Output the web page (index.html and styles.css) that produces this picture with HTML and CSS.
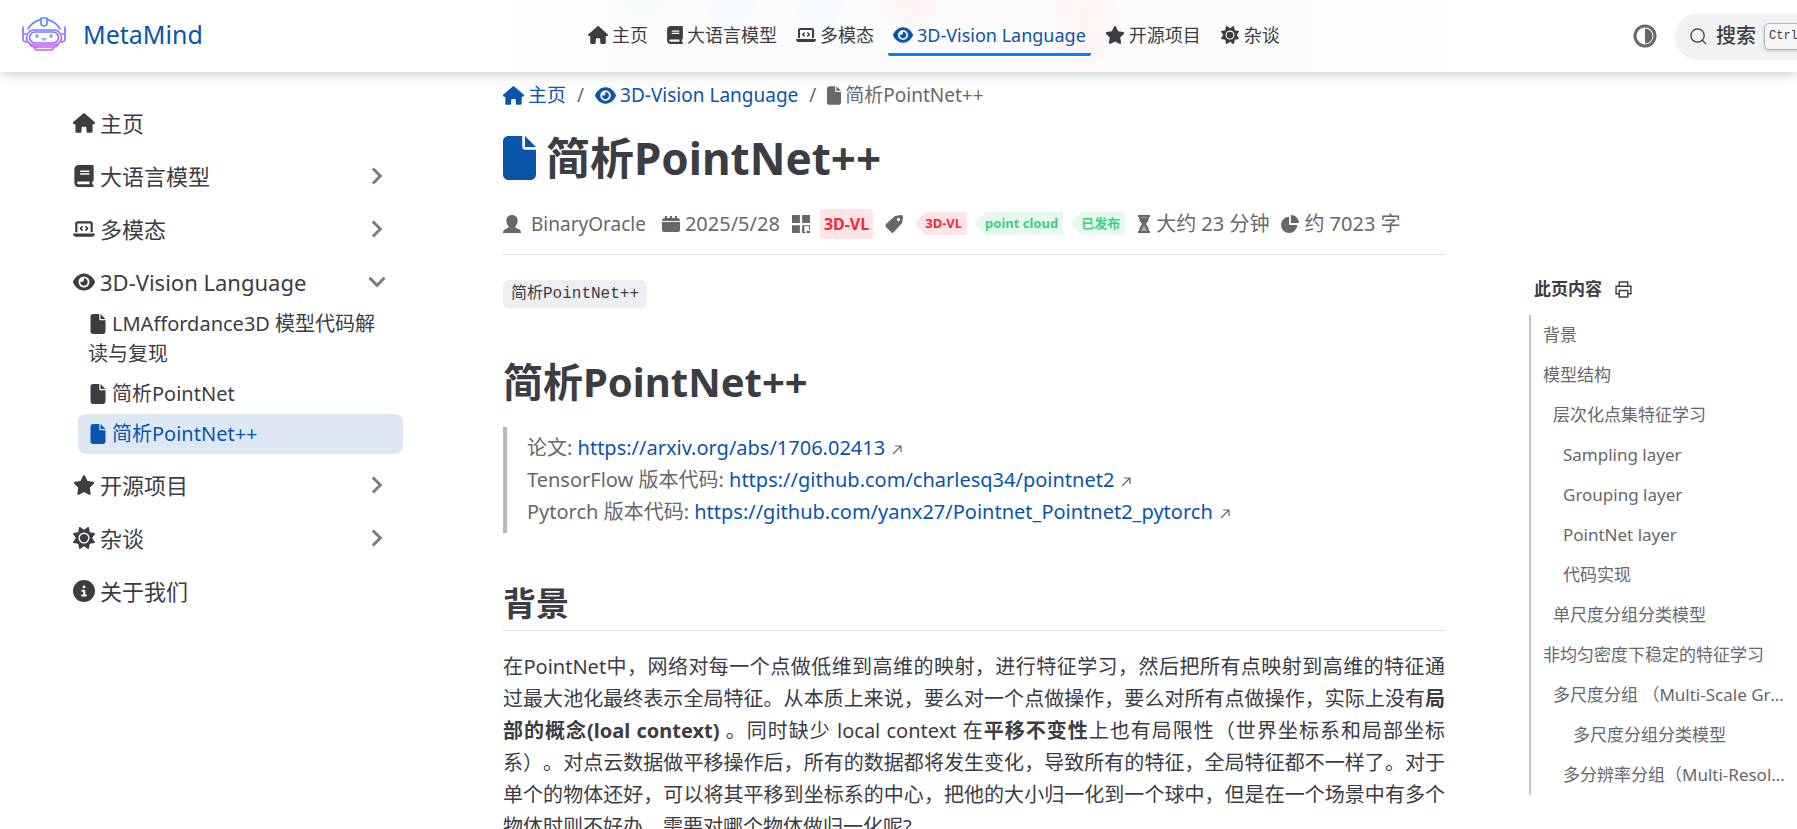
FILE: index.html
```html
<!DOCTYPE html>
<html lang="zh-CN">

<head>
    <meta charset="utf-8">
    <meta name="viewport" content="width=device-width, initial-scale=1">
    <title>简析PointNet++ | MetaMind</title>
    <link rel="stylesheet" href="styles.css">
</head>

<body>

    <!-- icon sprite -->
    <svg class="sprite" aria-hidden="true">
        <symbol id="i-home" viewBox="0 0 576 512"><path d="M575.8 255.5c0 18-15 32.1-32 32.1h-32l.7 160.2c0 2.7-.2 5.4-.5 8.1V472c0 22.1-17.9 40-40 40H456c-1.1 0-2.2 0-3.3-.1c-1.4 .1-2.8 .1-4.2 .1H416 392c-22.1 0-40-17.9-40-40V448 384c0-17.7-14.3-32-32-32H256c-17.7 0-32 14.3-32 32v64 24c0 22.1-17.9 40-40 40H160 128.1c-1.5 0-3-.1-4.5-.2c-1.2 .1-2.4 .2-3.6 .2H104c-22.1 0-40-17.9-40-40V360c0-.9 0-1.9 .1-2.8V287.6H32c-18 0-32-14-32-32.1c0-9 3-17 10-24L266.4 8c7-7 15-8 22-8s15 2 21 7L564.8 231.5c8 7 12 15 11 24z"/></symbol>
        <symbol id="i-book" viewBox="0 0 448 512"><path d="M96 0C43 0 0 43 0 96V416c0 53 43 96 96 96H384h32c17.7 0 32-14.3 32-32s-14.3-32-32-32V384c17.7 0 32-14.3 32-32V32c0-17.7-14.3-32-32-32H384 96zm0 384H352v64H96c-17.7 0-32-14.3-32-32s14.3-32 32-32zm32-240c0-8.8 7.2-16 16-16H336c8.8 0 16 7.2 16 16s-7.2 16-16 16H144c-8.8 0-16-7.2-16-16zm16 48H336c8.8 0 16 7.2 16 16s-7.2 16-16 16H144c-8.8 0-16-7.2-16-16s7.2-16 16-16z"/></symbol>
        <symbol id="i-laptop" viewBox="0 0 640 512"><path d="M64 96c0-35.3 28.7-64 64-64H512c35.3 0 64 28.7 64 64V352H512V96H128V352H64V96zM0 403.2C0 392.6 8.6 384 19.2 384H620.8c10.6 0 19.2 8.6 19.2 19.2c0 42.4-34.4 76.8-76.8 76.8H76.8C34.4 480 0 445.6 0 403.2zM281 209l-31 31 31 31c9.4 9.4 9.4 24.6 0 33.9s-24.6 9.4-33.9 0l-48-48c-9.4-9.4-9.4-24.6 0-33.9l48-48c9.4-9.4 24.6-9.4 33.9 0s9.4 24.6 0 33.9zM393 175l48 48c9.4 9.4 9.4 24.6 0 33.9l-48 48c-9.4 9.4-24.6 9.4-33.9 0s-9.4-24.6 0-33.9l31-31-31-31c-9.4-9.4-9.4-24.6 0-33.9s24.6-9.4 33.9 0z"/></symbol>
        <symbol id="i-eye" viewBox="0 0 576 512"><path d="M288 32c-80.8 0-145.5 36.8-192.6 80.6C48.6 156 17.3 208 2.5 243.7c-3.3 7.9-3.3 16.7 0 24.6C17.3 304 48.6 356 95.4 399.4C142.5 443.2 207.2 480 288 480s145.5-36.8 192.6-80.6c46.8-43.5 78.1-95.4 93-131.1c3.3-7.9 3.3-16.7 0-24.6c-14.9-35.7-46.2-87.7-93-131.1C433.5 68.8 368.8 32 288 32zM144 256a144 144 0 1 1 288 0 144 144 0 1 1 -288 0zm144-64c0 35.3-28.7 64-64 64c-7.1 0-13.9-1.2-20.3-3.3c-5.5-1.8-11.9 1.6-11.7 7.4c.3 6.9 1.3 13.8 3.2 20.7c13.7 51.2 66.4 81.6 117.6 67.9s81.6-66.4 67.9-117.6c-11.1-41.5-47.8-69.4-88.6-71.1c-5.8-.2-9.2 6.1-7.4 11.7c2.1 6.4 3.3 13.2 3.3 20.3z"/></symbol>
        <symbol id="i-star" viewBox="0 0 576 512"><path d="M316.9 18C311.6 7 300.4 0 288.1 0s-23.4 7-28.8 18L195 150.3 51.4 171.5c-12 1.8-22 10.2-25.7 21.7s-.7 24.2 7.9 32.7L137.8 329 113.2 474.7c-2 12 3 24.2 12.9 31.3s23 8 33.8 2.3l128.3-68.5 128.3 68.5c10.8 5.7 23.9 4.9 33.8-2.3s14.9-19.3 12.9-31.3L438.5 329 542.7 225.9c8.6-8.5 11.7-21.2 7.9-32.7s-13.7-19.9-25.7-21.7L381.2 150.3 316.9 18z"/></symbol>
        <symbol id="i-sun" viewBox="0 0 512 512"><path d="M361.5 1.2c5 2.1 8.6 6.6 9.6 11.9L391 121l107.9 19.8c5.3 1 9.8 4.6 11.9 9.6s1.5 10.7-1.6 15.2L446.9 256l62.3 90.3c3.1 4.5 3.7 10.2 1.6 15.2s-6.6 8.6-11.9 9.6L391 391 371.1 498.9c-1 5.3-4.6 9.8-9.6 11.9s-10.7 1.5-15.2-1.6L256 446.9l-90.3 62.3c-4.5 3.1-10.2 3.7-15.2 1.6s-8.6-6.6-9.6-11.9L121 391 13.1 371.1c-5.3-1-9.8-4.6-11.9-9.6s-1.5-10.7 1.6-15.2L65.1 256 2.8 165.7c-3.1-4.5-3.7-10.2-1.6-15.2s6.6-8.6 11.9-9.6L121 121 140.9 13.1c1-5.3 4.6-9.8 9.6-11.9s10.7-1.5 15.2 1.6L256 65.1 346.3 2.8c4.5-3.1 10.2-3.7 15.2-1.6zM160 256a96 96 0 1 1 192 0 96 96 0 1 1 -192 0zm224 0a128 128 0 1 0 -256 0 128 128 0 1 0 256 0z"/></symbol>
        <symbol id="i-info" viewBox="0 0 512 512"><path d="M256 512A256 256 0 1 0 256 0a256 256 0 1 0 0 512zM216 336h24V272H216c-13.3 0-24-10.7-24-24s10.7-24 24-24h48c13.3 0 24 10.7 24 24v88h8c13.3 0 24 10.7 24 24s-10.7 24-24 24H216c-13.3 0-24-10.7-24-24s10.7-24 24-24zm40-208a32 32 0 1 1 0 64 32 32 0 1 1 0-64z"/></symbol>
        <symbol id="i-file" viewBox="0 0 384 512"><path d="M0 64C0 28.7 28.7 0 64 0H224V128c0 17.7 14.3 32 32 32H384V448c0 35.3-28.7 64-64 64H64c-35.3 0-64-28.7-64-64V64zm384 64H256V0L384 128z"/></symbol>
        <symbol id="i-arrow" viewBox="0 0 24 24"><path d="M7 3l9 9-9 9" fill="none" stroke="currentColor" stroke-width="3.5"/></symbol>
        <symbol id="i-ext" viewBox="0 0 10 10"><path d="M1 9L9 1M3 1h6v6" fill="none" stroke="currentColor" stroke-width="1.2"/></symbol>
    </svg>

    <header class="navbar">
        <a class="brand" href="/">
            <svg class="logo" viewBox="0 0 44 34">
                <defs>
                    <linearGradient id="robot" gradientUnits="userSpaceOnUse" x1="0" y1="0" x2="0" y2="34">
                        <stop offset="0" stop-color="#3b8cff"/>
                        <stop offset="1" stop-color="#d455ff"/>
                    </linearGradient>
                </defs>
                <g fill="none" stroke="url(#robot)" stroke-width="1.6" stroke-linejoin="round" stroke-linecap="round">
                    <path d="M18.5 2.5Q10 5 6 12M25.5 2.5Q34 5 38 12"/>
                    <path d="M19 1h6v5q0 3-3 3t-3-3z"/>
                    <rect x="4.5" y="13" width="35" height="15" rx="7.5"/>
                    <rect x="7.5" y="15" width="29" height="11" rx="5.5"/>
                    <path d="M1 10v12q0 3 4 3M43 10v12q0 3-4 3M4 17H1M40 17h3M8 28q3 2 4 2h20q2 0 4-2M12 30l2 3h16l2-3"/>
                </g>
                <g fill="#83bdf8">
                    <circle cx="15" cy="19" r="2"/>
                    <circle cx="29" cy="19" r="2"/>
                    <path d="M19 21h6q-1 3-3 3t-3-3z"/>
                </g>
            </svg>
            <span>MetaMind</span>
        </a>
        <nav class="nav-links">
            <a href="/"><svg class="icon"><use href="#i-home"/></svg>主页</a>
            <a href="/llm/"><svg class="icon narrow"><use href="#i-book"/></svg>大语言模型</a>
            <a href="/mm/"><svg class="icon"><use href="#i-laptop"/></svg>多模态</a>
            <a href="/3dvl/" class="active"><svg class="icon"><use href="#i-eye"/></svg>3D-Vision Language</a>
            <a href="/open/"><svg class="icon"><use href="#i-star"/></svg>开源项目</a>
            <a href="/talk/"><svg class="icon"><use href="#i-sun"/></svg>杂谈</a>
        </nav>
        <div class="nav-end">
            <button class="theme" type="button" aria-label="主题">
                <svg viewBox="0 0 24 24"><circle cx="12" cy="12" r="10" fill="none" stroke="currentColor" stroke-width="3"/><path d="M12 4.5a7.5 7.5 0 0 1 0 15z"/></svg>
            </button>
            <button class="search" type="button">
                <svg viewBox="0 0 20 20"><circle cx="9" cy="9" r="7" /><path d="M14 14l4 4"/></svg>
                <span>搜索</span>
                <kbd>Ctrl</kbd><kbd>K</kbd>
            </button>
        </div>
    </header>

    <div class="layout">
        <aside class="sidebar">
            <ul>
                <li><a class="row" href="/"><svg class="icon"><use href="#i-home"/></svg>主页</a></li>
                <li><button class="row" type="button"><svg class="icon"><use href="#i-book"/></svg>大语言模型<svg class="arrow"><use href="#i-arrow"/></svg></button></li>
                <li><button class="row" type="button"><svg class="icon"><use href="#i-laptop"/></svg>多模态<svg class="arrow"><use href="#i-arrow"/></svg></button></li>
                <li>
                    <button class="row" type="button"><svg class="icon"><use href="#i-eye"/></svg>3D-Vision Language<svg class="arrow down"><use href="#i-arrow"/></svg></button>
                    <ul class="children">
                        <li><a href="#"><svg class="icon"><use href="#i-file"/></svg>LMAffordance3D 模型代码解读与复现</a></li>
                        <li><a href="#"><svg class="icon"><use href="#i-file"/></svg>简析PointNet</a></li>
                        <li><a href="#" class="active"><svg class="icon"><use href="#i-file"/></svg>简析PointNet++</a></li>
                    </ul>
                </li>
                <li><button class="row" type="button"><svg class="icon"><use href="#i-star"/></svg>开源项目<svg class="arrow"><use href="#i-arrow"/></svg></button></li>
                <li><button class="row" type="button"><svg class="icon"><use href="#i-sun"/></svg>杂谈<svg class="arrow"><use href="#i-arrow"/></svg></button></li>
                <li><a class="row" href="/about/"><svg class="icon"><use href="#i-info"/></svg>关于我们</a></li>
            </ul>
        </aside>

        <main class="content">
            <nav class="breadcrumb">
                <a href="/"><svg class="icon"><use href="#i-home"/></svg>主页</a>
                <span class="sep">/</span>
                <a href="/3dvl/"><svg class="icon"><use href="#i-eye"/></svg>3D-Vision Language</a>
                <span class="sep">/</span>
                <span><svg class="icon small"><use href="#i-file"/></svg>简析PointNet++</span>
            </nav>

            <h1 class="page-title"><svg><use href="#i-file"/></svg>简析PointNet++</h1>

            <div class="page-info">
                <span class="author"><svg viewBox="0 0 16 16"><path d="M8 0c3 0 5 2 5 5 0 2-1 4-2 5v1l4 2q1 1 1 3H0q0-2 1-3l4-2v-1C4 9 3 7 3 5c0-3 2-5 5-5z"/></svg>BinaryOracle</span>
                <span class="date"><svg viewBox="0 0 18 18"><path d="M0 7h18v8q0 2-2 2H2q-2 0-2-2zM0 6q0-3 3-3V1h2v2h3V1h2v2h3V1h2v2q3 0 3 3z"/></svg>2025/5/28</span>
                <span class="category"><svg viewBox="0 0 16 16"><path d="M0 0h7v7H0zM9 0h7v7H9zM0 9h7v7H0zM9 9h7v4h-1v-3h-4v5h1v1H9zM13 14h3v2h-3z"/></svg><b class="badge">3D-VL</b></span>
                <span class="tags"><svg viewBox="0 0 18 18"><path d="M10 1l6-1q2 0 2 2l-1 6-8 9q-2 2-3 0L1 12q-1-1 0-3zM13 3a1.5 1.5 0 1 0 1 3 1.5 1.5 0 0 0-1-3z" fill-rule="evenodd"/></svg><b class="tag red">3D-VL</b><b class="tag green">point cloud</b><b class="tag green">已发布</b></span>
                <span class="time"><svg viewBox="0 0 14 18"><path d="M1 0h12v2h-1q0 4-3 7 3 3 3 7h1v2H1v-2h1q0-4 3-7-3-3-3-7H1z"/><path d="M4 2h6v1H4zM7 11q2 1 3 5H4q1-4 3-5z" fill="#a5a5a8"/></svg>大约 23 分钟</span>
                <span class="words"><svg viewBox="0 0 20 20"><path d="M9 2v9h9a9 9 0 1 1-9-9zM11 0a9 9 0 0 1 9 9h-9z"/></svg>约 7023 字</span>
            </div>

            <article>
                <p class="lead"><code>简析PointNet++</code></p>

                <h1>简析PointNet++</h1>

                <blockquote>
                    论文: <a href="https://arxiv.org/abs/1706.02413">https://arxiv.org/abs/1706.02413</a><svg class="ext"><use href="#i-ext"/></svg><br>
                    TensorFlow 版本代码: <a href="https://github.com/charlesq34/pointnet2">https://github.com/charlesq34/pointnet2</a><svg class="ext"><use href="#i-ext"/></svg><br>
                    Pytorch 版本代码: <a href="https://github.com/yanx27/Pointnet_Pointnet2_pytorch">https://github.com/yanx27/Pointnet_Pointnet2_pytorch</a><svg class="ext"><use href="#i-ext"/></svg>
                </blockquote>

                <h2 id="bg">背景</h2>

                <p>在PointNet中，网络对每一个点做低维到高维的映射，进行特征学习，然后把所有点映射到高维的特征通过最大池化最终表示全局特征。从本质上来说，要么对一个点做操作，要么对所有点做操作，实际上没有<strong>局部的概念(loal context)</strong> 。同时缺少 local context 在<strong>平移不变性</strong>上也有局限性（世界坐标系和局部坐标系）。对点云数据做平移操作后，所有的数据都将发生变化，导致所有的特征，全局特征都不一样了。对于单个的物体还好，可以将其平移到坐标系的中心，把他的大小归一化到一个球中，但是在一个场景中有多个物体时则不好办，需要对哪个物体做归一化呢?</p>
            </article>
        </main>

        <aside class="toc">
            <div class="toc-title">此页内容
                <button type="button" aria-label="打印">
                    <svg viewBox="0 0 16 16"><path d="M4 5V1h8v4M4 12H1V5h14v7h-3M4 9h8v6H4z"/></svg>
                </button>
            </div>
            <ul>
                <li><a href="#bg">背景</a></li>
                <li><a href="#">模型结构</a></li>
                <li class="l2"><a href="#">层次化点集特征学习</a></li>
                <li class="l3"><a href="#">Sampling layer</a></li>
                <li class="l3"><a href="#">Grouping layer</a></li>
                <li class="l3"><a href="#">PointNet layer</a></li>
                <li class="l3"><a href="#">代码实现</a></li>
                <li class="l2"><a href="#">单尺度分组分类模型</a></li>
                <li><a href="#">非均匀密度下稳定的特征学习</a></li>
                <li class="l2"><a href="#">多尺度分组 （Multi-Scale Grouping）</a></li>
                <li class="l4"><a href="#">多尺度分组分类模型</a></li>
                <li class="l3"><a href="#">多分辨率分组（Multi-Resolution Grouping）</a></li>
            </ul>
        </aside>
    </div>

</body>

</html>
```
FILE: styles.css
```css
* {
    box-sizing: border-box;
}

html,
body {
    height: 100%;
    overflow: hidden;
}

body {
    margin: 0;
    font-family: "Noto Sans", "Noto Sans CJK SC", sans-serif;
    font-size: 19px;
    line-height: 28px;
    color: #3c3c43;
    background: #fff;
}

a {
    color: #0855ab;
    text-decoration: none;
}

ul {
    list-style: none;
    margin: 0;
    padding: 0;
}

button {
    font: inherit;
    color: inherit;
    background: none;
    border: none;
    padding: 0;
    cursor: pointer;
}

svg {
    fill: currentColor;
    flex-shrink: 0;
}

.sprite {
    display: none;
}

/* navbar */

.navbar {
    display: flex;
    align-items: center;
    position: relative;
    height: 72px;
    padding-left: 22px;
    overflow: hidden;
    background:
        radial-gradient(ellipse 40px 40px at 645px 0, #f3fbf6, transparent),
        radial-gradient(ellipse 40px 50px at 730px 0, #f2f8ff, transparent),
        radial-gradient(ellipse 40px 50px at 818px 0, #f2f8ff, transparent),
        radial-gradient(ellipse 40px 40px at 908px 0, #fff1f0, transparent),
        radial-gradient(ellipse 50px 70px at 1085px 20px, #fff3f2, transparent),
        linear-gradient(90deg, transparent 500px, #fcfcfc 620px, #fcfcfc 1300px, transparent 1460px),
        #fff;
    box-shadow: 0 2px 12px rgba(0, 0, 0, .2);
}

.brand {
    display: flex;
    align-items: center;
    flex: 0 0 561px;
    gap: 17px;
    margin-bottom: 4px;
    font-size: 25px;
}

.logo {
    width: 44px;
    height: 34px;
}

.nav-links {
    display: flex;
    flex: 1;
    gap: 9px;
    font-size: 18px;
    white-space: nowrap;
}

.nav-links a {
    display: flex;
    align-items: center;
    gap: 4px;
    height: 39px;
    padding: 0 5px;
    border-bottom: 3px solid transparent;
    color: inherit;
}

.nav-links a.active {
    color: #0855ab;
    border-color: #097dff;
    border-radius: 2px;
}

.nav-links .icon {
    width: 20px;
    height: 18px;
}

.nav-links .narrow {
    width: 16px;
}

.nav-end {
    display: flex;
    align-items: center;
    flex: 0 0 164px;
    min-width: 0;
    gap: 18px;
}

.theme {
    display: flex;
    color: #67676c;
}

.theme svg {
    width: 24px;
    height: 24px;
}

.search {
    display: flex;
    align-items: center;
    flex-shrink: 0;
    height: 47px;
    padding: 0 14px;
    border-radius: 23px;
    background: #f1f2f4;
    font-size: 20px;
    font-weight: 500;
    white-space: nowrap;
}

.search svg {
    width: 19px;
    height: 19px;
    margin-right: 8px;
    fill: none;
    stroke: currentColor;
    stroke-width: 1.4;
}

.search kbd {
    height: 27px;
    margin-left: 8px;
    padding: 0 4px;
    border: 1px solid #b8b8ba;
    border-radius: 5px;
    background: #f6f6f7;
    box-shadow: 0 1px 3px rgba(0, 0, 0, .2);
    font: 12px/25px "Liberation Mono", monospace;
}

/* layout */

.layout {
    display: grid;
    grid-template-columns: 443px minmax(0, 1fr) 268px;
}

/* sidebar */

.sidebar {
    padding: 30px 40px 0 73px;
    font-size: 22px;
}

.sidebar .row {
    display: flex;
    align-items: center;
    width: 100%;
    height: 43px;
    margin-bottom: 10px;
    padding-bottom: 2px;
    gap: 5px;
    color: inherit;
}

.sidebar .icon {
    width: 22px;
    height: 22px;
}

.arrow {
    width: 20px;
    height: 20px;
    margin-left: auto;
    margin-right: 16px;
    color: #7b7b7d;
}

.arrow.down {
    transform: rotate(90deg);
}

.sidebar .children {
    margin: -10px 0 10px 5px;
    font-size: 20px;
    line-height: 30px;
}

.children a {
    display: block;
    padding: 5px 20px 5px 10px;
    border-radius: 8px;
    color: inherit;
}

.children a.active {
    color: #0855ab;
    background: #dee8f5;
}

.children .icon {
    height: 20px;
    width: 20px;
    margin-right: 4px;
    vertical-align: -3px;
}

/* content */

.content {
    padding: 0 84px 0 60px;
}

.breadcrumb {
    display: flex;
    align-items: center;
    height: 46px;
    gap: 11px;
    font-size: 19px;
    color: #67676c;
}

.breadcrumb a,
.breadcrumb span {
    display: flex;
    align-items: center;
    gap: 4px;
}

.breadcrumb .icon {
    width: 21px;
    height: 19px;
}

.breadcrumb .small {
    width: 14px;
}

.page-title {
    display: flex;
    align-items: center;
    gap: 10px;
    margin: 13px 0 0;
    font-size: 44px;
    line-height: 54px;
}

.page-title svg {
    width: 33px;
    height: 44px;
    color: #0855ab;
}

.page-info {
    display: flex;
    align-items: center;
    gap: 12px;
    height: 70px;
    border-bottom: 1px solid #e2e2e3;
    padding-top: 8px;
    color: #67676c;
    font-size: 20px;
    white-space: nowrap;
}

.page-info span {
    display: flex;
    align-items: center;
    gap: 5px;
}

.page-info svg {
    width: 18px;
    height: 18px;
}

.page-info .author {
    gap: 10px;
    margin-right: 4px;
    font-size: 19px;
}

.page-info .time svg {
    width: 14px;
}

.badge {
    height: 30px;
    margin-left: 5px;
    padding: 0 4px;
    border-radius: 4px;
    background: #fde4e6;
    color: #f1293c;
    font-size: 16px;
    line-height: 30px;
}

.tag {
    height: 23px;
    margin-left: 3px;
    padding: 0 5px 0 10px;
    clip-path: polygon(10px 0, 100% 0, 100% 100%, 10px 100%, 0 50%);
    font-size: 13px;
    line-height: 23px;
}

.tag.red {
    margin-left: 7px;
    background: #fde4e6;
    color: #f1293c;
}

.tag.green {
    background: #e7f9ef;
    color: #3dd17c;
}

article {
    font-size: 20px;
    line-height: 32px;
}

article p {
    margin: 20px 0;
    text-align: justify;
    text-spacing-trim: space-all;
}

.lead code {
    padding: 5px 8px;
    border-radius: 6px;
    background: #eeeff3;
    font-family: "Liberation Mono", "Noto Sans CJK SC", monospace;
    font-size: 16px;
}

article h1 {
    margin: 46px 0 19px;
    font-size: 40px;
    line-height: 52px;
}

blockquote {
    margin: 0;
    padding: 5px 0 5px 20px;
    border-left: 4px solid #b8b8ba;
    color: #67676c;
}

.ext {
    width: 10px;
    height: 10px;
    margin-left: 7px;
}

article h2 {
    margin: 48px 0 20px;
    padding-bottom: 3px;
    border-bottom: 1px solid #e2e2e3;
    font-size: 33px;
    line-height: 46px;
}

/* table of contents */

.toc {
    padding: 200px 10px 0 0;
    font-size: 17px;
}

.toc-title {
    display: flex;
    align-items: center;
    height: 34px;
    gap: 13px;
    padding-left: 5px;
    font-weight: bold;
}

.toc-title svg {
    display: block;
    width: 17px;
    height: 17px;
    fill: none;
    stroke: currentColor;
    stroke-width: 1.3;
}

.toc ul {
    margin-top: 9px;
    border-left: 2px solid #c2c2c4;
}

.toc a {
    display: block;
    height: 40px;
    line-height: 40px;
    padding-left: 12px;
    overflow: hidden;
    color: #67676c;
    text-overflow: ellipsis;
    white-space: nowrap;
}

.toc .l2 {
    padding-left: 10px;
}

.toc .l3 {
    padding-left: 20px;
}

.toc .l4 {
    padding-left: 30px;
}
```
